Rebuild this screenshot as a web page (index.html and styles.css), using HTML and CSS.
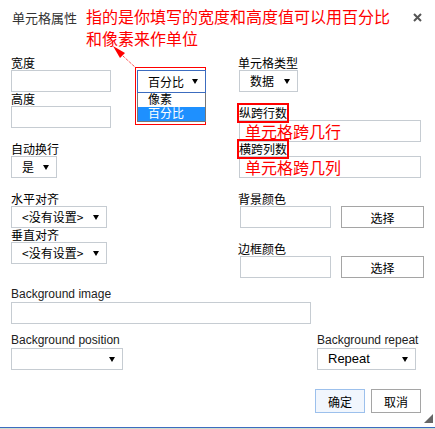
FILE: index.html
```html
<!DOCTYPE html>
<html>
<head>
  <title>单元格属性</title>
  <link rel="stylesheet" href="styles.css">
</head>
<body>
  <div class="dialog">
    <div class="head">
      <span class="title">单元格属性</span>
      <svg class="close" width="9" height="9" viewBox="0 0 9 9"><path d="M1 1L8 8M8 1L1 8" stroke="#555" stroke-width="2"/></svg>
    </div>

    <!-- annotation -->
    <div class="note">指的是你填写的宽度和高度值可以用百分比<br>和像素来作单位</div>
    <svg class="pointer" width="40" height="40" viewBox="0 0 40 40">
      <path d="M2 4L14 11L9 16Z" fill="#f00"/>
      <path d="M12 14L25 26" stroke="#f00" stroke-width="1" stroke-dasharray="1 1"/>
    </svg>
    <div class="popup">
      <div class="select sel-open">百分比 <i class="caret"></i></div>
      <ul class="options">
        <li>像素</li>
        <li class="active">百分比</li>
      </ul>
    </div>

    <div class="cols">
      <div class="col col-left">
        <label>宽度</label>
        <div class="input w-num"></div>
        <label>高度</label>
        <div class="input w-num"></div>
        <label class="gap">自动换行</label>
        <div class="select w-yes">是 <i class="caret"></i></div>
        <label class="gap">水平对齐</label>
        <div class="select w-align">&lt;没有设置&gt; <i class="caret"></i></div>
        <label>垂直对齐</label>
        <div class="select w-align">&lt;没有设置&gt; <i class="caret"></i></div>
      </div>
      <div class="col col-right">
        <label>单元格类型</label>
        <div class="select w-type">数据 <i class="caret"></i></div>
        <label class="gap"><span class="mark">纵跨行数</span></label>
        <div class="input w-full"><span class="hint">单元格跨几行</span></div>
        <label><span class="mark">横跨列数</span></label>
        <div class="input w-full"><span class="hint">单元格跨几列</span></div>
        <label class="gap">背景颜色</label>
        <div class="color-row">
          <div class="input w-color"></div>
          <button class="btn">选择</button>
        </div>
        <label class="gap">边框颜色</label>
        <div class="color-row">
          <div class="input w-color"></div>
          <button class="btn">选择</button>
        </div>
      </div>
    </div>

    <div class="wide">
      <label class="en">Background image</label>
      <div class="input w-image"></div>
    </div>

    <div class="bg-row">
      <div>
        <label class="en">Background position</label>
        <div class="select w-pos"><span></span><i class="caret"></i></div>
      </div>
      <div class="repeat">
        <label class="en">Background repeat</label>
        <div class="select w-repeat en">Repeat <i class="caret"></i></div>
      </div>
    </div>

    <div class="actions">
      <button class="btn btn-ok">确定</button>
      <button class="btn btn-cancel">取消</button>
    </div>

    <div class="grip"></div>
  </div>
</body>
</html>
```

FILE: styles.css
```css
/* dialog */
body {
  margin: 0;
  background: #fff;
  font-family: "Liberation Sans", "Noto Sans CJK SC", sans-serif;
  font-size: 12px;
  color: #000;
}

.dialog {
  position: relative;
  width: 435px;
  height: 429px;
  box-sizing: border-box;
  padding: 0 14px 0 11px;
  border-bottom: 1px solid #cfdccf;
  overflow: hidden;
}

.dialog::after {
  content: "";
  position: absolute;
  left: 0;
  right: 0;
  bottom: 0;
  height: 1px;
  background: #3c6cbf;
}

.head {
  display: flex;
  justify-content: space-between;
  align-items: center;
  height: 34px;
  margin-bottom: 22px;
}

.title {
  font-size: 13px;
  color: #333;
  padding-left: 1px;
}

.close {
  margin-right: -1px;
}

/* annotation layer */
.note {
  position: absolute;
  left: 86px;
  top: 5px;
  font-size: 16px;
  line-height: 22px;
  color: #f00;
  font-family: "Noto Sans CJK SC", sans-serif;
}

.pointer {
  position: absolute;
  left: 111px;
  top: 42px;
}

.popup {
  position: absolute;
  left: 135px;
  top: 67px;
  width: 71px;
  box-sizing: border-box;
  border: 1px solid #f00;
  padding: 2px 0 2px 1px;
  background: #fff;
}

.popup .select {
  width: 69px;
  height: 23px;
  border-color: #3c6cbf;
}

.options {
  list-style: none;
  margin: 0;
  padding: 0;
  width: 69px;
  box-sizing: border-box;
  border: 1px solid #767676;
  border-top: none;
}

.options li {
  height: 14px;
  line-height: 14px;
  padding-left: 10px;
}

.options li.active {
  background: #1e90ff;
  color: #fff;
}

/* form columns */
.cols {
  display: flex;
}

.col-left {
  flex: none;
  width: 227px;
}

.col-right {
  flex: 1;
}

label {
  display: block;
  height: 14px;
  line-height: 14px;
  font-family: "Noto Sans CJK SC", sans-serif;
}

label.gap {
  margin-top: 14px;
}

label.en {
  font-family: "Liberation Sans", sans-serif;
  height: 15px;
  line-height: 15px;
  color: #222;
}

.mark {
  display: inline-block;
  border: 2px solid #f00;
  padding: 1px 0;
  margin: -3px 0 0 -1px;
  line-height: 14px;
}

.input,
.select {
  height: 22px;
  box-sizing: border-box;
  border: 1px solid #c6ccd2;
  background: #fff;
}

.col-right .input,
.col-right .select,
.col-right .color-row {
  margin-left: 1px;
}

.select {
  display: flex;
  align-items: center;
  justify-content: space-between;
  padding: 0 7px 0 10px;
  line-height: 20px;
  font-family: "Noto Sans CJK SC", sans-serif;
}

.select.en {
  font-family: "Liberation Sans", sans-serif;
  font-size: 13px;
}

.caret {
  width: 0;
  height: 0;
  border-left: 3px solid transparent;
  border-right: 3px solid transparent;
  border-top: 5px solid #000;
}

.hint {
  display: block;
  padding: 1px 0 0 5px;
  font-size: 16px;
  line-height: 18px;
  color: #f00;
  font-family: "Noto Sans CJK SC", sans-serif;
  overflow: hidden;
  height: 20px;
}

.w-num { width: 100px; }
.w-yes { width: 46px; }
.w-align { width: 96px; }
.w-type { width: 59px; }
.w-full { width: 182px; }
.w-color { width: 91px; }
.w-image { width: 300px; }
.w-pos { width: 112px; }
.w-repeat { width: 99px; }

.color-row {
  display: flex;
  gap: 10px;
}

.btn {
  height: 22px;
  box-sizing: border-box;
  border: 1px solid #a5a5a5;
  background: #fff;
  font-family: "Noto Sans CJK SC", sans-serif;
  font-size: 12px;
  padding: 0;
  color: #000;
}

.color-row .btn {
  width: 83px;
}

/* lower part */
.wide {
  margin-top: 9px;
}

.bg-row {
  display: flex;
  justify-content: space-between;
  margin-top: 9px;
}

.repeat {
  width: 104px;
}

.actions {
  display: flex;
  justify-content: flex-end;
  gap: 6px;
  margin-top: 19px;
}

.actions .btn {
  height: 24px;
  width: 50px;
}

.btn-ok {
  background: #f1f6fd;
  border-color: #9cc0ec;
}

.btn-cancel {
  width: 51px;
}

.grip {
  position: absolute;
  right: 2px;
  bottom: 5px;
  width: 0;
  height: 0;
  border-left: 9px solid transparent;
  border-bottom: 9px solid #666;
}
```
